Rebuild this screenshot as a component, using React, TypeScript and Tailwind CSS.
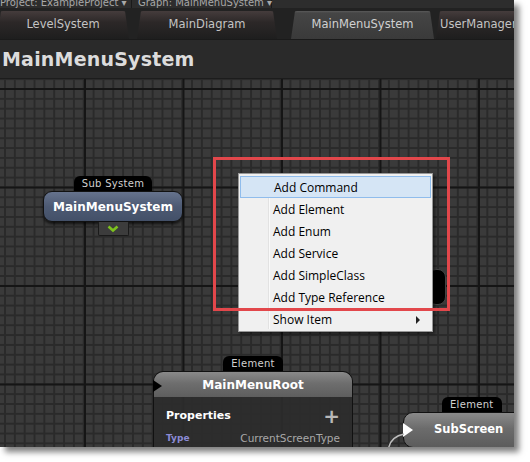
import React from "react";

const MENU = [
  "Add Command",
  "Add Element",
  "Add Enum",
  "Add Service",
  "Add SimpleClass",
  "Add Type Reference",
];

function Tab({ label, active, className }: { label: string; active?: boolean; className: string }) {
  return (
    <div
      className={
        "h-[28px] flex items-center justify-center rounded-t-[6px] text-[11.5px] shrink-0 whitespace-nowrap overflow-hidden [clip-path:polygon(4px_0,calc(100%-4px)_0,100%_100%,0_100%)] " +
        (active
          ? "bg-[linear-gradient(#5a5a5a,#454545_2px,#3a3a3a)] text-[#d0d0d0] "
          : "bg-[linear-gradient(#453c3c,#2c2828_40%,#1e1e1e)] text-[#c4c4c4] ") +
        className
      }
    >
      {label}
    </div>
  );
}

function Label({ text }: { text: string }) {
  return (
    <div className="bg-black rounded-t-[6px] px-[8px] h-[15px] flex items-center text-[10px] text-[#d0d0d0] tracking-[0.3px]">
      {text}
    </div>
  );
}

export default function App() {
  return (
    <div className="w-[530px] h-[462px] bg-white font-['DejaVu_Sans',sans-serif]">
      <div className="w-[514px] h-[447px] flex flex-col overflow-hidden bg-[#202020] shadow-[5px_5px_6px_rgba(0,0,0,0.5)]">
        {/* project / graph strip, scrolled half out of view */}
        <div className="h-[8px] bg-[#2d2d2d] flex items-end overflow-hidden text-[10px] text-[#a8a8a8] shrink-0 whitespace-nowrap">
          <div className="flex items-center h-[13px] -mb-[1px]">
            <span className="w-[132px] border-r border-[#1a1a1a]">Project: ExampleProject ▾</span>
            <span className="pl-[6px] w-[140px] border-r border-[#1a1a1a]">Graph: MainMenuSystem ▾</span>
          </div>
        </div>

        {/* tabs */}
        <div className="h-[32px] bg-[#222] flex items-end shrink-0 border-b border-[#1a1a1a]">
          <Tab label="LevelSystem" className="w-[132px] -ml-[3px]" />
          <Tab label="MainDiagram" className="w-[140px] ml-[8px]" />
          <Tab label="MainMenuSystem" active className="w-[143px] ml-[14px]" />
          <Tab label="UserManager" className="w-[100px] ml-[2px] !justify-start pl-[4px]" />
        </div>

        {/* title */}
        <div className="h-[39px] bg-[#2a2a2a] flex items-center pl-[2px] shrink-0 border-b border-[#1c1c1c]">
          <span className="text-[19px] font-bold text-[#dcdcdc] tracking-[0.2px]">MainMenuSystem</span>
        </div>

        {/* canvas */}
        <div className="flex-1 relative bg-[#3a3a3a] [background-image:linear-gradient(to_right,#151515_2px,transparent_2px),linear-gradient(to_bottom,#151515_2px,transparent_2px),linear-gradient(to_right,#2a2a2a_2px,transparent_2px),linear-gradient(to_bottom,#2a2a2a_2px,transparent_2px)] [background-size:98.5px_100%,100%_98.5px,9.85px_100%,100%_9.85px] [background-position:84px_0,0_9px,4px_0,0_9px]">
          {/* sub system node */}
          <div className="absolute left-[43px] top-[97px] w-[140px] flex flex-col items-center">
            <Label text="Sub System" />
            <div className="w-[140px] h-[31px] rounded-[9px] border border-[#111] bg-[linear-gradient(#66738d,#4d5a73_50%,#435068)] shadow-[0_2px_3px_rgba(0,0,0,0.7)] flex items-center justify-center text-[12px] font-bold text-white">
              MainMenuSystem
            </div>
            <div className="w-[31px] h-[14px] bg-[#3c3c3c] border border-[#1a1a1a] border-t-0 rounded-b-[2px] flex items-center justify-center">
              <svg width="12" height="8" viewBox="0 0 12 8">
                <path d="M1.5 1.5 L6 5.5 L10.5 1.5" stroke="#7dc21e" strokeWidth="2.6" fill="none" />
              </svg>
            </div>
          </div>

          {/* node hidden behind the menu */}
          <div className="absolute left-[428px] top-[190px] w-[18px] h-[36px] rounded-[8px] bg-black border border-[#444]" />

          {/* context menu */}
          <div className="absolute left-[238px] top-[94px] w-[195px] h-[159px] bg-[#f0f0f0] border border-[#979797] shadow-[2px_2px_3px_rgba(0,0,0,0.5)] p-[2px] font-['Open_Sans',sans-serif] text-[12px] text-black">
            <div className="absolute left-[29px] top-[2px] bottom-[2px] w-[2px] border-l border-[#e2e2e2] bg-white/60" />
            {MENU.map((m, i) => (
              <div
                key={m}
                className={
                  "relative h-[22px] flex items-center pl-[32px] " +
                  (i === 0 ? "bg-[#d5e5f5] border border-[#8fbcec] -mx-[1px] pl-[33px] pt-[2px]" : "pt-[2px]")
                }
              >
                {m}
              </div>
            ))}
            <div className="relative h-[22px] flex items-center pl-[32px] pt-[2px]">
              Show Item
              <span className="absolute right-[10px] top-[8px] w-0 h-0 border-y-[4px] border-y-transparent border-l-[4px] border-l-[#222]" />
            </div>
          </div>

          {/* highlight box */}
          <div className="absolute left-[213px] top-[78px] w-[237px] h-[154px] border-[3px] border-[#e2474b]" />

          {/* MainMenuRoot element */}
          <div className="absolute left-[153px] top-[277px] w-[200px] flex flex-col items-center">
            <Label text="Element" />
            <div className="relative w-[200px] h-[26px] rounded-t-[10px] bg-[linear-gradient(#8a8a8a,#6e6e6e_45%,#5e5e5e)] border border-[#111] border-b-0 flex items-center justify-center text-[12px] font-bold text-white">
              MainMenuRoot
              <span className="absolute left-[-1px] top-[8px] w-0 h-0 border-y-[6px] border-y-transparent border-l-[9px] border-l-black" />
            </div>
            <div className="w-[200px] h-[60px] bg-[#2c2c2c]/90 border-x border-[#111] px-[12px] pt-[11px]">
              <div className="flex items-center justify-between">
                <span className="text-[11px] font-bold text-white">Properties</span>
                <span className="text-[20px] leading-[14px] font-bold text-[#b8b8b8]">+</span>
              </div>
              <div className="flex items-center justify-between mt-[6px]">
                <span className="text-[9px] font-bold text-[#8b8bd6]">Type</span>
                <span className="text-[10.5px] text-[#a8a8a8]">CurrentScreenType</span>
              </div>
            </div>
          </div>

          {/* SubScreen element */}
          <div className="absolute left-[403px] top-[318px] w-[140px] flex flex-col items-start">
            <div className="ml-[39px]">
              <Label text="Element" />
            </div>
            <div className="relative w-[140px] h-[36px] rounded-l-[10px] bg-[linear-gradient(#8a8a8a,#6c6c6c_45%,#5c5c5c)] border border-[#111] flex items-center pl-[30px] text-[11.5px] font-bold text-white">
              SubScreen
              <span className="absolute left-[-1px] top-[10px] w-0 h-0 border-y-[7px] border-y-transparent border-l-[10px] border-l-white" />
            </div>
          </div>

          {/* connection curve */}
          <svg className="absolute left-[380px] top-[345px]" width="30" height="30" viewBox="0 0 30 30">
            <path d="M8 30 C8 18 14 12 24 10" stroke="#bdbdbd" strokeWidth="1.5" fill="none" />
          </svg>
        </div>
      </div>
    </div>
  );
}
